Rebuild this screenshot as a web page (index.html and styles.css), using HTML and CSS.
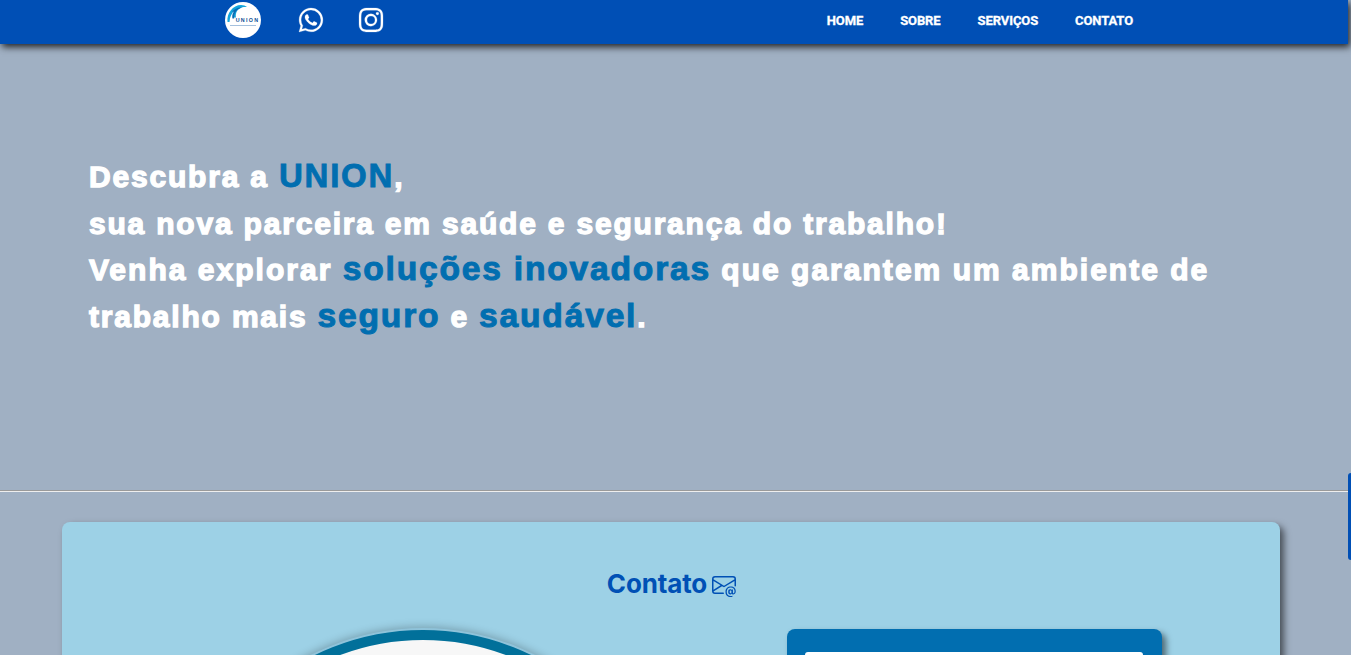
FILE: index.html
```html
<!DOCTYPE html>
<html lang="pt-BR">
<head>
<meta charset="utf-8">
<title>Union</title>
<link rel="stylesheet" href="styles.css">
</head>
<body>
<div class="page">
  <header class="topbar">
    <div class="brand">
      <a class="logo" href="#">
        <svg viewBox="0 0 36 36" width="36" height="36">
          <circle cx="18" cy="18" r="18" fill="#fff"/>
          <path d="M2.500 20C1.500 11 8 3 16 3c2.500 0 4.500.8 6 2-5-.6-9 1.500-10.500 5-.8 2-.9 4-.5 5.500H8.500c-.4-2.500 0-5 1.300-7-3 2.500-5 6-5.300 11.500z" fill="#12a5dc"/>
          <path d="M7 10c2.500-3.500 6.500-5 10.500-4.500-3.500.6-6 2.500-7.500 5.500-.8 1.700-1 3.500-.8 5.500H7.500C7 14.500 7 12 9 9.500z" fill="#0a6cb4"/>
          <text x="22.500" y="19.500" class="logo-word">UNION</text>
          <rect x="5" y="23" width="26" height=".8" fill="#8fb2d6"/>
        </svg>
      </a>
      <a class="social" href="#">
        <svg viewBox="0 0 16 16" width="24" height="24" fill="#fff"><path d="M13.601 2.326A7.85 7.85 0 0 0 7.994 0C3.627 0 .068 3.558.064 7.926c0 1.399.366 2.76 1.057 3.965L0 16l4.204-1.102a7.9 7.9 0 0 0 3.79.965h.004c4.368 0 7.926-3.558 7.93-7.93A7.9 7.9 0 0 0 13.6 2.326zM7.994 14.521a6.6 6.6 0 0 1-3.356-.92l-.24-.144-2.494.654.666-2.433-.156-.251a6.56 6.56 0 0 1-1.007-3.505c0-3.626 2.957-6.584 6.591-6.584a6.56 6.56 0 0 1 4.66 1.931 6.56 6.56 0 0 1 1.928 4.66c-.004 3.639-2.961 6.592-6.592 6.592m3.615-4.934c-.197-.099-1.17-.578-1.353-.646-.182-.065-.315-.099-.445.099-.133.197-.513.646-.627.775-.114.133-.232.148-.43.05-.197-.1-.836-.308-1.592-.985-.59-.525-.985-1.175-1.103-1.372-.114-.198-.011-.304.088-.403.087-.088.197-.232.296-.346.1-.114.133-.198.198-.33.065-.134.034-.248-.015-.347-.05-.099-.445-1.076-.612-1.47-.16-.389-.323-.335-.445-.34-.114-.007-.247-.007-.38-.007a.73.73 0 0 0-.529.247c-.182.198-.691.677-.691 1.654s.71 1.916.81 2.049c.098.133 1.394 2.132 3.383 2.992.47.205.84.326 1.129.418.475.152.904.129 1.246.08.38-.058 1.171-.48 1.338-.943.164-.464.164-.86.114-.943-.049-.084-.182-.133-.38-.232"/></svg>
      </a>
      <a class="social" href="#">
        <svg viewBox="0 0 16 16" width="24" height="24" fill="#fff"><path d="M8 0C5.829 0 5.556.01 4.703.048 3.85.088 3.269.222 2.76.42a3.9 3.9 0 0 0-1.417.923A3.9 3.9 0 0 0 .42 2.76C.222 3.268.087 3.85.048 4.7.01 5.555 0 5.827 0 8.001c0 2.172.01 2.444.048 3.297.04.852.174 1.433.372 1.942.205.526.478.972.923 1.417.444.445.89.719 1.416.923.51.198 1.09.333 1.942.372C5.555 15.99 5.827 16 8 16s2.444-.01 3.298-.048c.851-.04 1.434-.174 1.943-.372a3.9 3.9 0 0 0 1.416-.923c.445-.445.718-.891.923-1.417.197-.509.332-1.09.372-1.942C15.99 10.445 16 10.173 16 8s-.01-2.445-.048-3.299c-.04-.851-.175-1.433-.372-1.941a3.9 3.9 0 0 0-.923-1.417A3.9 3.9 0 0 0 13.24.42c-.51-.198-1.092-.333-1.943-.372C10.443.01 10.172 0 7.998 0zm-.717 1.442h.718c2.136 0 2.389.007 3.232.046.78.035 1.204.166 1.486.275.373.145.64.319.92.599s.453.546.598.92c.11.281.24.705.275 1.485.039.843.047 1.096.047 3.231s-.008 2.389-.047 3.232c-.035.78-.166 1.203-.275 1.485a2.5 2.5 0 0 1-.599.919c-.28.28-.546.453-.92.598-.28.11-.704.24-1.485.276-.843.038-1.096.047-3.232.047s-2.39-.009-3.233-.047c-.78-.036-1.203-.166-1.485-.276a2.5 2.5 0 0 1-.92-.598 2.5 2.5 0 0 1-.6-.92c-.109-.281-.24-.705-.275-1.485-.038-.843-.046-1.096-.046-3.233s.008-2.388.046-3.231c.036-.78.166-1.204.276-1.486.145-.373.319-.64.599-.92s.546-.453.92-.598c.282-.11.705-.24 1.485-.276.738-.034 1.024-.044 2.515-.045zm4.988 1.328a.96.96 0 1 0 0 1.92.96.96 0 0 0 0-1.92m-4.27 1.122a4.109 4.109 0 1 0 0 8.217 4.109 4.109 0 0 0 0-8.217m0 1.441a2.667 2.667 0 1 1 0 5.334 2.667 2.667 0 0 1 0-5.334"/></svg>
      </a>
    </div>
    <nav class="menu">
      <a href="#">HOME</a>
      <a href="#">SOBRE</a>
      <a href="#">SERVIÇOS</a>
      <a href="#">CONTATO</a>
    </nav>
  </header>

  <section class="hero">
    <p class="hero-text">Descubra a <span class="big">UNION</span>,<br>
    sua nova parceira em saúde e segurança do trabalho!<br>
    <span class="wide">Venha explorar <span class="mid">soluções inovadoras</span> que garantem um ambiente de</span> trabalho mais <span class="mid">seguro</span> e <span class="mid">saudável</span>.</p>
  </section>

  <hr class="divider">

  <section class="contact">
    <h2 class="contact-title">Contato
      <svg viewBox="0 0 16 16" width="24" height="24" fill="#0050b5"><path d="M2 2a2 2 0 0 0-2 2v8.01A2 2 0 0 0 2 14h5.5a.5.5 0 0 0 0-1H2a1 1 0 0 1-.966-.741l5.64-3.471L8 9.583l7-4.2V8.5a.5.5 0 0 0 1 0V4a2 2 0 0 0-2-2zm3.708 6.208L1 11.105V5.383zM1 4.217V4a1 1 0 0 1 1-1h12a1 1 0 0 1 1 1v.217l-7 4.2z"/><path d="M14.247 14.269c1.01 0 1.587-.857 1.587-2.025v-.21C15.834 10.43 14.64 9 12.52 9h-.035C10.42 9 9 10.36 9 12.432v.214C9 14.82 10.438 16 12.358 16h.044c.594 0 1.018-.074 1.237-.175v-.73c-.245.11-.673.18-1.18.18h-.044c-1.334 0-2.571-.788-2.571-2.655v-.157c0-1.657 1.058-2.724 2.64-2.724h.04c1.535 0 2.484 1.05 2.484 2.326v.118c0 .975-.324 1.39-.639 1.39-.232 0-.41-.148-.41-.42v-2.19h-.906v.569h-.03c-.084-.298-.368-.63-.954-.63-.778 0-1.259.555-1.259 1.4v.528c0 .892.49 1.434 1.26 1.434.471 0 .896-.227 1.014-.643h.043c.118.42.617.648 1.12.648m-2.453-1.588v-.227c0-.546.227-.791.573-.791.297 0 .572.192.572.708v.367c0 .573-.253.744-.564.744-.354 0-.581-.215-.581-.8Z"/></svg>
    </h2>
    <div class="contact-body">
      <div class="photo"></div>
      <form class="form-box">
        <div class="field"></div>
      </form>
    </div>
  </section>
</div>
<div class="scroll-thumb"></div>
</body>
</html>
```
FILE: styles.css
```css
* { box-sizing: border-box; }
html, body { margin: 0; height: 655px; overflow: hidden; }
body { background: #a0b0c3; font-family: "Inter", "Liberation Sans", sans-serif; }
a { text-decoration: none; color: inherit; }

.page { width: 1348px; }

.topbar {
  height: 44px;
  background: #004fb5;
  display: flex;
  align-items: center;
  padding: 0 215px 0 225px;
  box-shadow: 2px 3px 7px rgba(0, 0, 0, .8);
  position: relative;
}
.brand { display: flex; align-items: center; gap: 36px; }
.logo { display: block; width: 36px; height: 36px; margin-top: -4px; margin-right: 2px; }
.logo svg { display: block; }
.logo-word { font: 700 5.300px "Liberation Sans", sans-serif; letter-spacing: 1.300px; fill: #0b4f96; text-anchor: middle; }
.social { display: block; height: 24px; margin-top: -5px; }
.social svg { display: block; overflow: visible; stroke: #fff; stroke-width: .15px; }
.menu {
  margin-left: auto;
  display: flex;
  gap: 37px;
  font: 700 13px "Roboto", sans-serif;
  color: #fff;
  letter-spacing: -.1px;
  -webkit-text-stroke: .3px #fff;
  margin-top: -3px;
}

.hero { height: 446px; padding: 110px 89px 0; }
.hero-text {
  margin: 0;
  color: #fff;
  font-family: "Liberation Sans", sans-serif;
  font-size: 30px;
  font-weight: 700;
  line-height: 46.500px;
  letter-spacing: 1.800px;
  -webkit-text-stroke: 1.300px #fff;
  width: 1160px;
}
.wide { letter-spacing: 2.020px; }
.big { color: #016eb0; -webkit-text-stroke: .8px #016eb0; font-size: 33px; line-height: 1; }
.mid { color: #016eb0; -webkit-text-stroke: 1px #016eb0; font-size: 33.600px; line-height: 1; letter-spacing: 1.800px; }

.divider { margin: 0; height: 2px; border: 0; border-top: 1px solid #9a9a9a; border-bottom: 1px solid #eee; }

.contact {
  margin: 30px 0 0 62px;
  width: 1218px;
  height: 500px;
  background: #9dd1e6;
  border-radius: 8px;
  box-shadow: 4px 4px 7px rgba(0, 0, 0, .55);
  padding-top: 45px;
}
.contact-title {
  margin: 0;
  display: flex;
  justify-content: center;
  align-items: center;
  gap: 5px;
  font-size: 26px;
  font-weight: 700;
  line-height: 34px;
  color: #0050b5;
  letter-spacing: -.15px;
  padding-left: 1px;
}
.contact-title svg { position: relative; top: 1px; }
.contact-body { display: flex; align-items: flex-start; padding: 29px 0 0 115px; gap: 118px; }
.photo {
  width: 492px;
  height: 492px;
  flex: none;
  border-radius: 50%;
  background: #f7f7f7;
  border: 10px solid #01709a;
  box-shadow: 0 0 0 2px #8fc3da, 0 0 8px 3px rgba(0, 0, 0, .25);
}
.form-box {
  width: 375px;
  height: 420px;
  flex: none;
  margin-top: -1px;
  background: #016eb0;
  border-radius: 8px;
  box-shadow: 4px 4px 6px rgba(0, 0, 0, .5);
  padding: 23px 19px 23px 18px;
}
.field { height: 40px; background: #fff; border-radius: 3px; }

.scroll-thumb {
  position: absolute;
  top: 473px;
  left: 1348px;
  width: 3px;
  height: 87px;
  background: #004fb5;
  border-radius: 3px 0 0 3px;
}
```
